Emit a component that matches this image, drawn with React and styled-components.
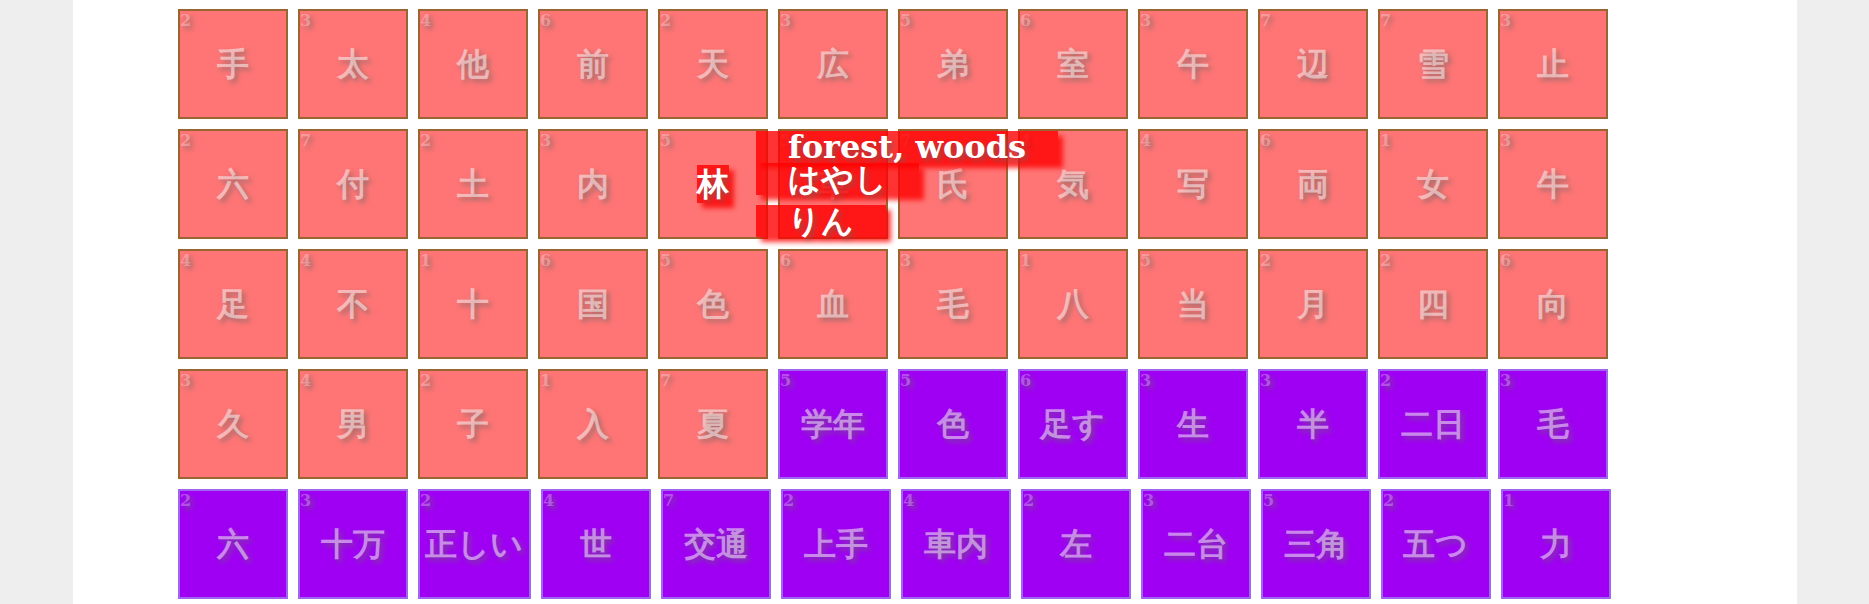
import React from "react";
import styled, { createGlobalStyle } from "styled-components";

const Global = createGlobalStyle`
  body {
    margin: 0;
    background: #eee;
    font-family: "DejaVu Serif", serif;
    font-weight: bold;
  }
`;

const Page = styled.main`
  box-sizing: border-box;
  min-height: 100vh;
  margin: 0 72px 0 73px;
  padding: 9px 105px 5px;
  background: #fff;
`;

const Grid = styled.ul`
  display: flex;
  flex-wrap: wrap;
  gap: 10px;
  margin: 0;
  padding: 0;
  list-style: none;
`;

const Tile = styled.li`
  position: relative;
  box-sizing: border-box;
  display: flex;
  align-items: center;
  justify-content: center;
  min-width: 110px;
  height: 110px;
  padding: 0 6px 0 5px;
  border: 2px solid ${(p) => (p.$word ? "#a066f0" : "#963")};
  background: ${(p) => (p.$word ? "#9f00f3" : "#ff7575")};
  text-shadow: 3px 3px 5px rgba(102, 102, 102, 0.6);
`;

const Grade = styled.span`
  position: absolute;
  top: 0;
  left: 0;
  color: rgba(255, 255, 255, 0.3);
  font-size: 16px;
  line-height: 19px;
`;

const Glyph = styled.span`
  color: ${(p) => (p.$active ? "#fff" : "rgba(255, 255, 255, 0.5)")};
  font-size: 32px;
  line-height: 38px;
  ${(p) =>
    p.$active &&
    "background: rgba(255, 0, 0, 0.8); box-shadow: 5px 5px 5px rgba(255, 0, 0, 0.8);"}
`;

const Readings = styled.div`
  position: absolute;
  z-index: 1;
  top: 0;
  left: 96px;
  display: flex;
  flex-direction: column;
  align-items: flex-start;
  color: #fff;
  white-space: nowrap;
`;

const Reading = styled.span`
  height: 32px;
  margin-bottom: ${(p) => (p.$spaced ? "10px" : 0)};
  padding: 0 32px;
  background: rgba(255, 0, 0, 0.8);
  box-shadow: 5px 5px 5px rgba(255, 0, 0, 0.8);
  font-size: 32px;
  line-height: 32px;
`;

const kanji =
  "手2 太3 他4 前6 天2 広3 弟5 室6 午3 辺7 雪7 止3 六2 付7 土2 内3 林5 車5 氏7 気4 写4 両6 女1 牛3 足4 不4 十1 国6 色5 血6 毛3 八1 当5 月2 四2 向6 久3 男4 子2 入1 夏7";
const words =
  "学年5 色5 足す6 生3 半3 二日2 毛3 六2 十万3 正しい2 世4 交通7 上手2 車内4 左2 二台3 三角5 五つ2 力1";

const parse = (list, word) =>
  list.split(" ").map((s) => ({ text: s.slice(0, -1), grade: s.slice(-1), word }));

const tiles = [...parse(kanji, false), ...parse(words, true)];

export default function App() {
  return (
    <>
      <Global />
      <Page>
        <Grid>
          {tiles.map(({ text, grade, word }, i) => {
            const active = text === "林";
            return (
              <Tile key={i} $word={word}>
                <Grade>{grade}</Grade>
                <Glyph $active={active}>{text}</Glyph>
                {active && (
                  <Readings>
                    <Reading>forest, woods</Reading>
                    <Reading $spaced>はやし</Reading>
                    <Reading>りん</Reading>
                  </Readings>
                )}
              </Tile>
            );
          })}
        </Grid>
      </Page>
    </>
  );
}
